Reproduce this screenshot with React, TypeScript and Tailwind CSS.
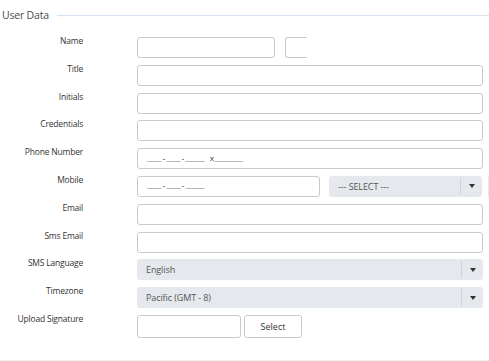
import React from 'react'

const font = { fontFamily: '"Open Sans", Lato, sans-serif' }

function Caret() {
  return (
    <div className="flex w-[22px] shrink-0 items-center justify-center border-l border-[#cfd3d8] self-stretch my-[2px]">
      <svg width="6" height="4" viewBox="0 0 6 4">
        <path d="M0 0 H6 L3 4 Z" fill="#333" />
      </svg>
    </div>
  )
}

function TextBox({ className = '', value }: { className?: string; value?: string }) {
  return (
    <div
      className={`h-[21px] shrink-0 rounded-[3px] border border-[#cacaca] bg-white flex items-center pl-[9px] text-[8px] text-[#333] font-['Liberation_Mono',monospace] ${className}`}
    >
      {value}
    </div>
  )
}

function SelectBox({ className = '', value }: { className?: string; value: string }) {
  return (
    <div
      className={`h-[21px] shrink-0 rounded-[3px] bg-[#e5e8ec] flex items-center text-[9px] tracking-[-0.1px] text-[#555] ${className}`}
    >
      <div className="flex-1 pl-[9px] truncate">{value}</div>
      <Caret />
    </div>
  )
}

function Row({ label, children }: { label: string; children: React.ReactNode }) {
  return (
    <div className="flex items-start">
      <div className="w-[83px] shrink-0 text-right text-[8.5px] tracking-[-0.2px] leading-[10px] -mt-[1px] text-[#333]">
        {label}
      </div>
      <div className="ml-[54px] w-[346px] flex items-center">{children}</div>
    </div>
  )
}

export default function App() {
  return (
    <div className="w-[489px] h-[361px] bg-white overflow-hidden relative" style={font}>
      <div className="flex items-center h-[30px]">
        <div className="pl-[2px] text-[10.5px] tracking-[-0.2px] text-[#4a4a4a] leading-none">User Data</div>
        <div className="ml-[8px] flex-1 h-px bg-[#d6e1f0]" />
      </div>

      <div className="mt-[7px] flex flex-col gap-[6.8px]">
        <Row label="Name">
          <TextBox className="w-[138px]" />
          <div className="ml-[10px] shrink-0 w-[22px] h-[21px] rounded-l-[3px] border-y border-l border-[#cacaca]" />
        </Row>
        <Row label="Title">
          <TextBox className="w-[346px]" />
        </Row>
        <Row label="Initials">
          <TextBox className="w-[346px]" />
        </Row>
        <Row label="Credentials">
          <TextBox className="w-[346px]" />
        </Row>
        <Row label="Phone Number">
          <TextBox className="w-[346px]" value="___-___-____ x______" />
        </Row>
        <Row label="Mobile">
          <TextBox className="w-[183px]" value="___-___-____" />
          <SelectBox className="ml-[9px] w-[153px]" value="--- SELECT ---" />
          <div className="ml-[6px] shrink-0 w-[2px] h-[21px] bg-[#e5e8ec]" />
        </Row>
        <Row label="Email">
          <TextBox className="w-[346px]" />
        </Row>
        <Row label="Sms Email">
          <TextBox className="w-[346px]" />
        </Row>
        <Row label="SMS Language">
          <SelectBox className="w-[346px]" value="English" />
        </Row>
        <Row label="Timezone">
          <SelectBox className="w-[346px]" value="Pacific (GMT - 8)" />
        </Row>
        <Row label="Upload Signature">
          <TextBox className="w-[104px] h-[23px]" />
          <button className="ml-[3px] shrink-0 w-[58px] h-[23px] rounded-[3px] border border-[#cacaca] bg-white text-[9px] text-[#333]">
            Select
          </button>
        </Row>
      </div>

      <div className="absolute left-0 right-0 top-[360px] h-px bg-[#eeeeee]" />
    </div>
  )
}
